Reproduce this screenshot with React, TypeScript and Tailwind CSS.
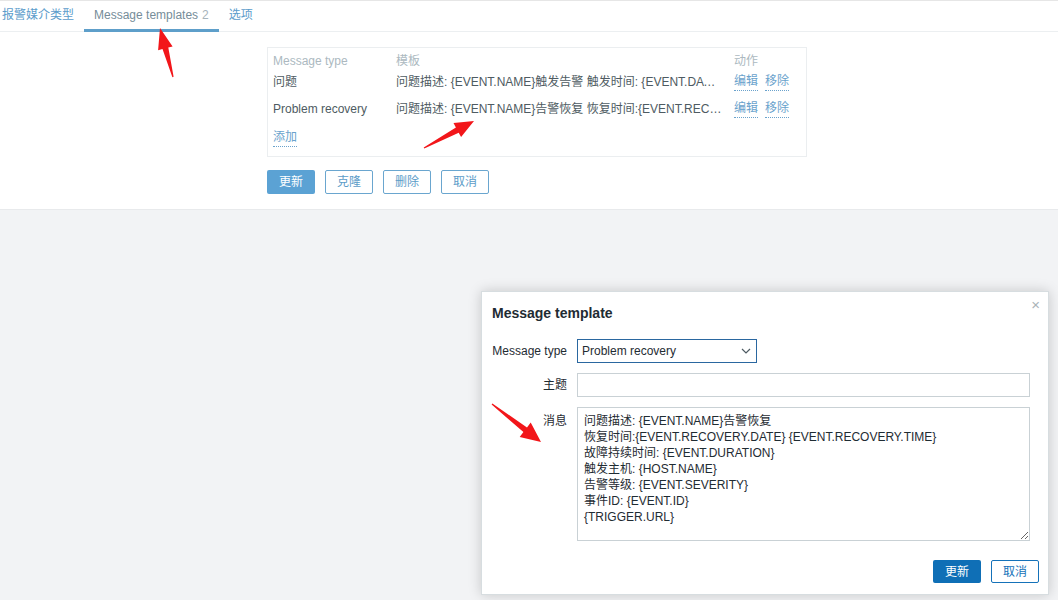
import React from "react";

const font = { fontFamily: '"Liberation Sans", Arial, "Noto Sans CJK SC", sans-serif' };

const templates = [
  { type: "问题", text: "问题描述: {EVENT.NAME}触发告警 触发时间: {EVENT.DATE} {EVENT.TIME}" },
  { type: "Problem recovery", text: "问题描述: {EVENT.NAME}告警恢复 恢复时间:{EVENT.RECOVERY.DATE} {EVENT.RECOVERY.TIME}" },
];

const message = [
  "问题描述: {EVENT.NAME}告警恢复",
  "恢复时间:{EVENT.RECOVERY.DATE} {EVENT.RECOVERY.TIME}",
  "故障持续时间: {EVENT.DURATION}",
  "触发主机: {HOST.NAME}",
  "告警等级: {EVENT.SEVERITY}",
  "事件ID: {EVENT.ID}",
  "{TRIGGER.URL}",
].join("\n");

// polygon for a hand-drawn style annotation arrow
function arrowPoints(tx: number, ty: number, hx: number, hy: number, head = 19, wing = 8, shaft = 3) {
  const dx = hx - tx;
  const dy = hy - ty;
  const len = Math.hypot(dx, dy);
  const ux = dx / len;
  const uy = dy / len;
  const nx = -uy;
  const ny = ux;
  const bx = hx - ux * head;
  const by = hy - uy * head;
  const p = (x: number, y: number) => `${x.toFixed(1)},${y.toFixed(1)}`;
  return [
    p(tx + nx * 0.6, ty + ny * 0.6),
    p(bx + nx * shaft, by + ny * shaft),
    p(bx + nx * wing, by + ny * wing),
    p(hx, hy),
    p(bx - nx * wing, by - ny * wing),
    p(bx - nx * shaft, by - ny * shaft),
    p(tx - nx * 0.6, ty - ny * 0.6),
  ].join(" ");
}

function PageButton({ label, primary }: { label: string; primary?: boolean }) {
  return (
    <button
      className={
        primary
          ? "w-[48px] h-[24px] rounded-[2px] bg-[#5ba2d4] text-white text-[12px]"
          : "w-[48px] h-[24px] rounded-[2px] border border-[#6aa6cf] text-[#5c9cc8] text-[12px] bg-white"
      }
    >
      {label}
    </button>
  );
}

export default function App() {
  return (
    <div className="relative w-[1058px] h-[600px] overflow-hidden bg-[#f2f3f5] text-[12px] text-[#1f2c33]" style={font}>
      {/* page */}
      <div className="bg-white border-t border-[#e6e6e6] border-b border-b-[#e8eaec] h-[210px]">
        <div className="flex h-[31px] border-b border-[#eceff1]">
          <div className="pl-[2px] pr-[10px] flex items-center text-[#5c9ccb] pb-[2px]">报警媒介类型</div>
          <div className="px-[10px] flex items-center text-[#768d99] border-b-[3px] border-[#5e9fca] mb-[-1px]">
            Message templates <span className="ml-[4px] text-[#a7b4bb]">2</span>
          </div>
          <div className="px-[10px] flex items-center text-[#5c9ccb] pb-[2px]">选项</div>
        </div>

        <div className="ml-[267px] mt-[15px] w-[540px] border border-[#ebeef0] pt-[3px] pb-[4px] px-[5px]">
          <div className="flex h-[20px] items-center text-[#acb9bf]">
            <div className="w-[123px]">Message type</div>
            <div className="w-[338px]">模板</div>
            <div>动作</div>
          </div>
          {templates.map((t) => (
            <div key={t.type} className="flex h-[27px] pt-[2px] items-start">
              <div className="w-[123px] leading-[18px] text-[#4e5b62]">{t.type}</div>
              <div className="w-[338px] pr-[12px] leading-[18px] truncate text-[#4e5b62]">{t.text}</div>
              <div className="flex gap-[7px] text-[#6aa2cc]">
                <span className="border-b border-dotted border-[#6aa2cc] leading-[17px]">编辑</span>
                <span className="border-b border-dotted border-[#6aa2cc] leading-[17px]">移除</span>
              </div>
            </div>
          ))}
          <div className="h-[27px] pt-[3px]">
            <span className="text-[#6aa2cc] border-b border-dotted border-[#6aa2cc] leading-[17px] inline-block">添加</span>
          </div>
        </div>

        <div className="ml-[267px] mt-[13px] flex gap-[10px]">
          <PageButton label="更新" primary />
          <PageButton label="克隆" />
          <PageButton label="删除" />
          <PageButton label="取消" />
        </div>
      </div>

      {/* dialog */}
      <div className="absolute left-[481px] top-[291px] w-[568px] h-[304px] bg-white border border-[#d7dde0] shadow-[0_0_12px_rgba(0,0,0,0.18)] px-[10px]">
        <div className="absolute right-[8px] top-[2px] text-[#a9b3b8] text-[15px]">×</div>
        <div className="pt-[12px] text-[14px] font-bold text-[#1f2c33] leading-[18px]">Message template</div>

        <div className="mt-[17px] flex flex-col gap-[10px]">
          <div className="flex items-center">
            <div className="w-[75px] text-right text-[#1f2c33]">Message type</div>
            <div className="ml-[10px] w-[180px] h-[24px] border border-[#2a67a0] flex items-center justify-between pl-[4px] pr-[5px]">
              <span>Problem recovery</span>
              <svg width="10" height="6" viewBox="0 0 10 6" fill="none" stroke="#4e5b62" strokeWidth="1.2">
                <path d="M1 1l4 4 4-4" />
              </svg>
            </div>
          </div>
          <div className="flex items-center">
            <div className="w-[75px] text-right">主题</div>
            <div className="ml-[10px] w-[453px] h-[24px] border border-[#c9d1d5]" />
          </div>
          <div className="flex items-start">
            <div className="w-[75px] text-right pt-[5px]">消息</div>
            <textarea
              readOnly
              defaultValue={message}
              className="block ml-[10px] w-[453px] h-[134px] border border-[#c9d1d5] pt-[5px] px-[6px] text-[12px] leading-[16px] text-[#1f2c33] outline-none"
              style={font}
            />
          </div>
        </div>

        <div className="mt-[19px] flex justify-end gap-[10px] mr-[-1px]">
          <button className="w-[48px] h-[23px] rounded-[2px] bg-[#0f6fb6] text-white text-[12px]">更新</button>
          <button className="w-[48px] h-[23px] rounded-[2px] border border-[#1572b9] text-[#1572b9] text-[12px] bg-white">取消</button>
        </div>
      </div>

      {/* annotation arrows */}
      <svg className="absolute inset-0 pointer-events-none" width="1058" height="600">
        <polygon points={arrowPoints(173, 77, 160, 28, 21, 7.5, 3)} fill="#f2161a" />
        <polygon points={arrowPoints(424, 148, 474, 121, 19, 8, 3)} fill="#f2161a" />
        <polygon points={arrowPoints(492, 404, 541, 442, 20, 9, 3)} fill="#f2161a" />
      </svg>
    </div>
  );
}
